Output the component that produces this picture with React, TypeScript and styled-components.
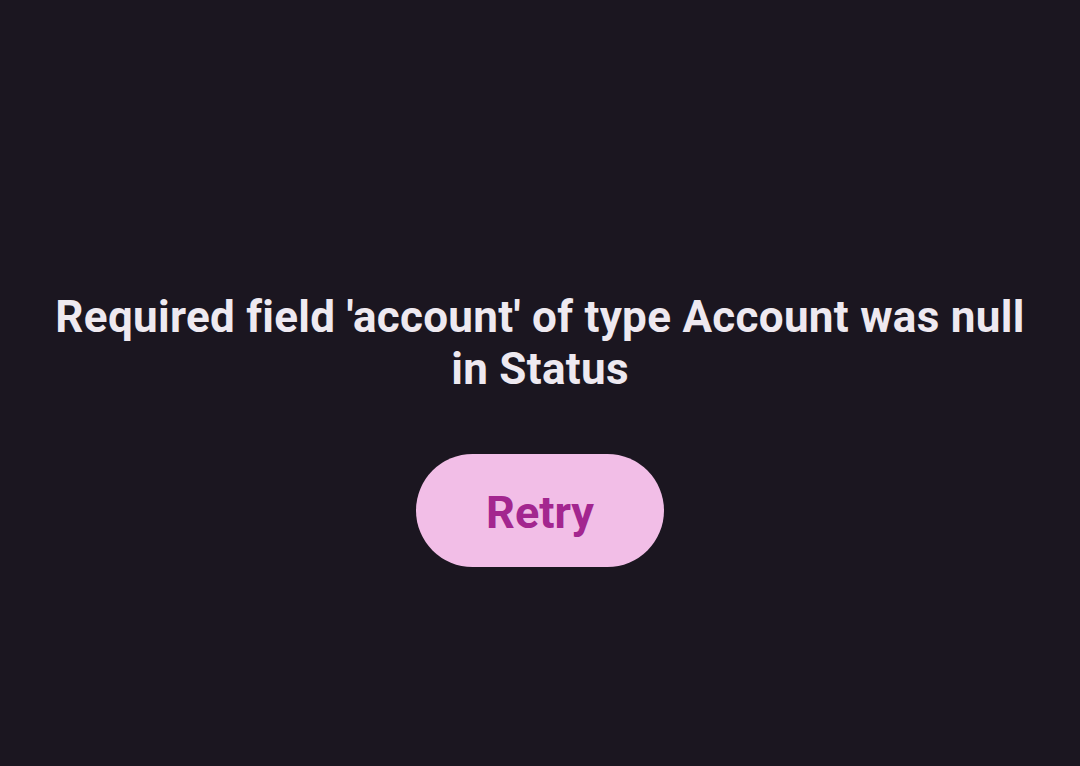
import React from 'react'
import styled, { createGlobalStyle } from 'styled-components'

const GlobalStyle = createGlobalStyle`
	html, body {
		margin: 0;
		padding: 0;
		background: #1b1620;
	}
	body {
		font-family: Roboto, 'Noto Sans', sans-serif;
	}
`

const Screen = styled.div`
	height: 766px;
	box-sizing: border-box;
	padding-top: 92px;
	display: flex;
	flex-direction: column;
	align-items: center;
	justify-content: center;
	gap: 59px;
	background: #1b1620;
`

const Message = styled.h1`
	margin: 0;
	padding: 0 30px;
	max-width: 1000px;
	text-align: center;
	font-size: 44px;
	line-height: 52px;
	font-weight: 700;
	letter-spacing: 0.3px;
	color: #eee9f0;
`

const RetryButton = styled.button`
	width: 248px;
	height: 113px;
	padding: 4px 0 0;
	border: none;
	border-radius: 57px;
	background: #f2bee7;
	color: #a3268f;
	font-family: Roboto, 'Noto Sans', sans-serif;
	font-size: 45px;
	font-weight: 700;
	cursor: pointer;
`

export default function App() {
	return (
		<>
			<GlobalStyle />
			<Screen>
				<Message>
					Required field 'account' of type Account was null in Status
				</Message>
				<RetryButton>Retry</RetryButton>
			</Screen>
		</>
	)
}
